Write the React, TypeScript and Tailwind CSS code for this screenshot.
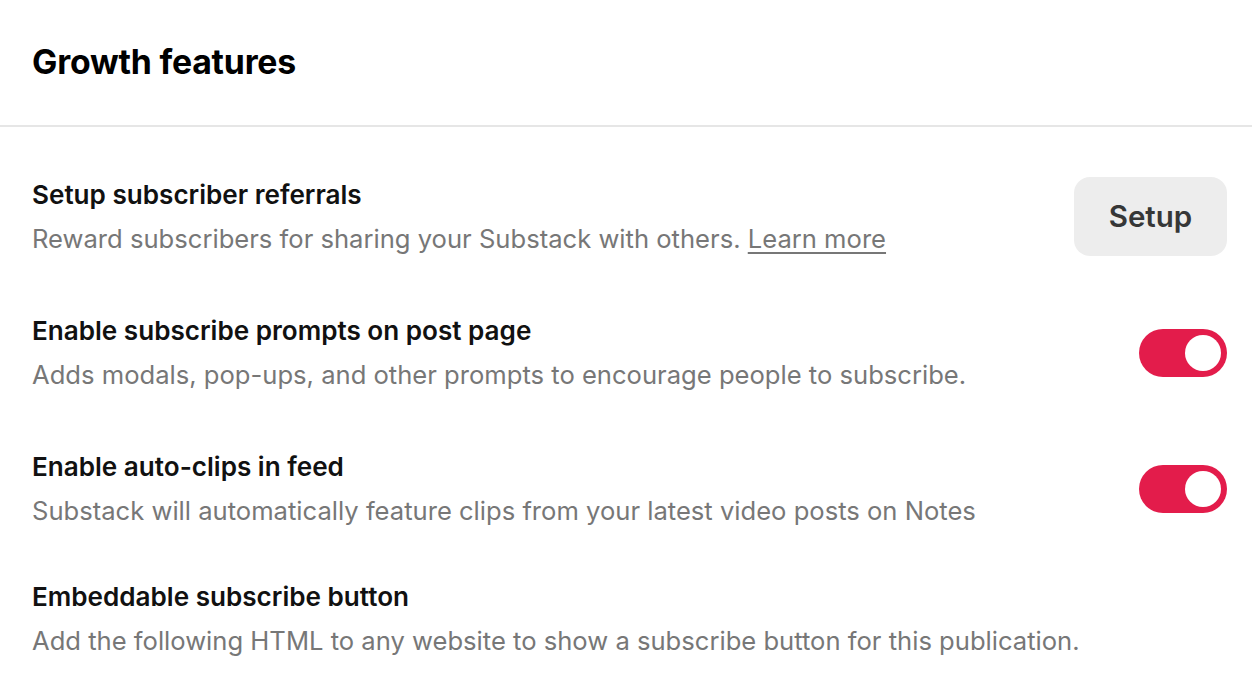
import {useState} from 'react';

type Feature = {
  id: string;
  title: string;
  description: string;
  link?: string;
  control: 'button' | 'toggle' | 'none';
};

const FEATURES: Feature[] = [
  {
    id: 'referrals',
    title: 'Setup subscriber referrals',
    description: 'Reward subscribers for sharing your Substack with others.',
    link: 'Learn more',
    control: 'button',
  },
  {
    id: 'prompts',
    title: 'Enable subscribe prompts on post page',
    description:
      'Adds modals, pop-ups, and other prompts to encourage people to subscribe.',
    control: 'toggle',
  },
  {
    id: 'clips',
    title: 'Enable auto-clips in feed',
    description:
      'Substack will automatically feature clips from your latest video posts on Notes',
    control: 'toggle',
  },
];

function Toggle({on, onChange}: {on: boolean; onChange: () => void}) {
  return (
    <button
      onClick={onChange}
      className={`flex h-[48px] w-[88px] shrink-0 items-center rounded-full px-[6px] transition-colors ${
        on ? 'justify-end bg-[#e31c4b]' : 'justify-start bg-[#d9d9d9]'
      }`}>
      <span className="block h-[36px] w-[36px] rounded-full bg-white" />
    </button>
  );
}

function FeatureText({title, description, link}: Omit<Feature, 'id' | 'control'>) {
  return (
    <div>
      <h3 className="text-[26.1px] leading-[32px] font-semibold whitespace-nowrap text-[#111111]">
        {title}
      </h3>
      <p className="mt-[12px] text-[25.6px] leading-[32px] whitespace-nowrap text-[#777777]">
        {description}
        {link && (
          <>
            {' '}
            <a href="#" className="underline underline-offset-[4px]">
              {link}
            </a>
          </>
        )}
      </p>
    </div>
  );
}

export default function App() {
  const [toggles, setToggles] = useState<Record<string, boolean>>({
    prompts: true,
    clips: true,
  });

  return (
    <div
      className="min-h-screen bg-white"
      style={{fontFamily: 'Inter, "Noto Sans", sans-serif'}}>
      {/* Header */}
      <div className="flex h-[127px] items-center border-b-2 border-[#e6e6e6] px-8">
        <h1 className="text-[33.8px] font-bold tracking-[-0.2px] text-black">
          Growth features
        </h1>
      </div>

      <div className="flex flex-col gap-[60px] pl-8 pr-[25px] pt-[52px]">
        {FEATURES.map((f) => (
          <div key={f.id} className="flex h-[76px] items-center justify-between">
            <FeatureText title={f.title} description={f.description} link={f.link} />
            {f.control === 'button' && (
              <button className="-mt-[2px] flex h-[79px] w-[153px] shrink-0 items-center justify-center rounded-[16px] bg-[#ededed] text-[29.5px] font-semibold text-[#363737]">
                Setup
              </button>
            )}
            {f.control === 'toggle' && (
              <Toggle
                on={!!toggles[f.id]}
                onChange={() => setToggles((t) => ({...t, [f.id]: !t[f.id]}))}
              />
            )}
          </div>
        ))}
      </div>

      <div className="mt-[54px] pl-8 pr-[25px]">
        <FeatureText
          title="Embeddable subscribe button"
          description="Add the following HTML to any website to show a subscribe button for this publication."
        />
      </div>
    </div>
  );
}
